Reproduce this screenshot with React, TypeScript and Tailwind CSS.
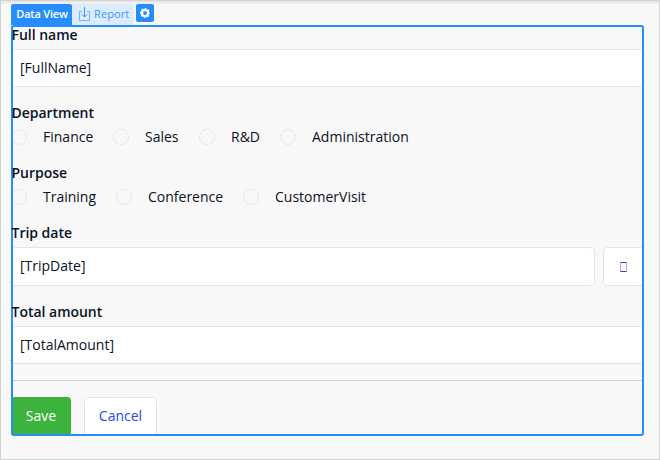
import type { ReactNode } from "react";

function Label({ children }: { children: ReactNode }) {
  return <div className="relative z-20 h-5 pl-[0.5px] text-[14px] leading-5 font-semibold tracking-[-0.02px] text-[#0a1326]">{children}</div>;
}

function Radio({ label, width }: { label: string; width: string }) {
  return (
    <label className={`flex items-center gap-4 ${width}`}>
      <span className="size-4 shrink-0 rounded-full border border-[#e7e7e9]" />
      <span className="whitespace-nowrap">{label}</span>
    </label>
  );
}

function Input({ value, className }: { value: string; className: string }) {
  return (
    <div className={`flex items-center border border-[#e4e4e6] bg-white pl-2 ${className}`}>{value}</div>
  );
}

function Toolbar() {
  return (
    <div className="flex h-[21px] items-start text-[11px] leading-[20px]">
      <div className="h-[21px] w-[61px] rounded-t-[2px] bg-[#278dfc] pl-px text-center font-semibold tracking-[-0.22px] text-white">
        Data View
      </div>
      <div className="flex h-[21px] w-[62px] items-start gap-1 bg-[#dbecfe] pl-[7px] text-[#3d94fd]">
        <svg className="mt-[3px]" width="11" height="14" viewBox="0 0 11 14" fill="none">
          <path d="M3 4.5H.5v9h10v-9H8" stroke="#78b1fb" />
          <path d="M5.5 0v10M3 7.5l2.5 2.5L8 7.5" stroke="#3d8ffb" />
        </svg>
        <span className="leading-[20px] tracking-[0.1px]">Report</span>
      </div>
      <div className="ml-[2px] flex h-[18px] w-[18px] items-center justify-center rounded-[2px] bg-[#278dfc]">
        <svg width="10" height="10" viewBox="0 0 20 20" fill="none" stroke="white">
          <circle cx="10" cy="10" r="6" strokeWidth="4.4" />
          <circle cx="10" cy="10" r="8.8" strokeWidth="2.4" strokeDasharray="3.8 3.11" strokeDashoffset="1.9" />
        </svg>
      </div>
    </div>
  );
}

export default function App() {
  return (
    <div className="h-[460px] w-[660px] border border-[#d3d3d3] bg-[#f8f8f8] bg-[linear-gradient(#e6e6e6,#f8f8f8_4px)] pt-[3px] pl-[10px] font-['Open_Sans',sans-serif] text-[14px] leading-5 text-[#0a1326]">
      <Toolbar />
      <div className="relative h-[411px] w-[633px]">
        <div className="h-full overflow-hidden rounded-[3px]">
          <Label>Full name</Label>
          <Input value="[FullName]" className="mt-1 h-[38px] w-full rounded" />
          <div className="mt-4">
            <Label>Department</Label>
            <div className="mt-1 flex h-5">
              <Radio label="Finance" width="w-[102px]" />
              <Radio label="Sales" width="w-[86px]" />
              <Radio label="R&D" width="w-[81px]" />
              <Radio label="Administration" width="w-[140px]" />
            </div>
          </div>
          <div className="mt-4">
            <Label>Purpose</Label>
            <div className="mt-1 flex h-5">
              <Radio label="Training" width="w-[105px]" />
              <Radio label="Conference" width="w-[127px]" />
              <Radio label="CustomerVisit" width="w-[140px]" />
            </div>
          </div>
          <div className="mt-4">
            <Label>Trip date</Label>
            <div className="mt-1 flex gap-2">
              <Input value="[TripDate]" className="h-[39px] w-[584px] rounded pb-px" />
              <div className="flex h-[39px] w-[41px] shrink-0 items-center justify-center rounded-l border border-[#e4e4e6] bg-white">
                <span className="h-[10px] w-[7px] border-x border-y border-x-[#b9a9f5] border-y-[#264ae5]" />
              </div>
            </div>
          </div>
          <div className="mt-4">
            <Label>Total amount</Label>
            <Input value="[TotalAmount]" className="mt-1 h-[38px] w-full rounded" />
          </div>
          <div className="mt-4 h-px bg-[#d1d1d1]" />
          <div className="mt-4 flex gap-[13px]">
            <div className="flex h-[39px] w-[60px] items-center justify-center rounded bg-[#3cb33d] pb-px font-medium text-white">Save</div>
            <div className="flex h-[39px] w-[73px] items-center justify-center rounded border border-[#e4e4e6] bg-white pb-px text-[#264ae5]">
              Cancel
            </div>
          </div>
        </div>
        <div className="absolute inset-0 z-10 rounded-[3px] border-2 border-[#278dfc]" />
        <div className="absolute top-[257px] -left-px h-px w-px bg-[#a9cffb]" />
        <div className="absolute top-[335px] -left-px h-px w-px bg-[#a9cffb]" />
      </div>
    </div>
  );
}
